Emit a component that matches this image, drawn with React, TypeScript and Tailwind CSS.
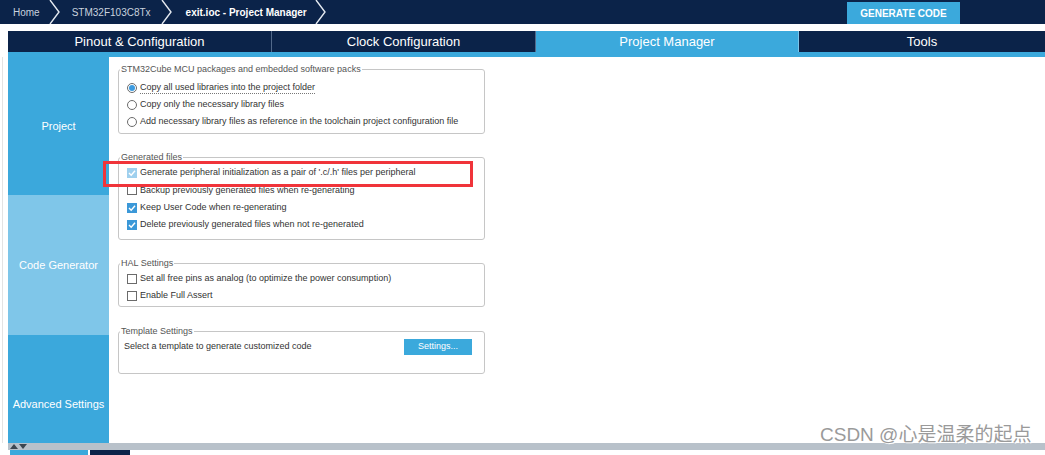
import React from 'react'

const NAVY = 'bg-[#0b2349]'

function Chevron() {
  return (
    <svg width="14" height="24" viewBox="0 0 14 24" className="shrink-0">
      <polyline points="2,0 11,12 2,24" fill="none" stroke="#e4e9f0" strokeWidth="1.4" />
    </svg>
  )
}

function Radio({ checked }: { checked?: boolean }) {
  return (
    <span className="w-[10px] h-[10px] rounded-full border border-[#6b6b6b] bg-white flex items-center justify-center shrink-0">
      {checked && <span className="w-[6px] h-[6px] rounded-full bg-[#3d9be0]" />}
    </span>
  )
}

function Check({ checked, dim }: { checked?: boolean; dim?: boolean }) {
  if (!checked) {
    return <span className="w-[10px] h-[10px] border border-[#6b6b6b] bg-white shrink-0" />
  }
  return (
    <span
      className={`w-[10px] h-[10px] flex items-center justify-center shrink-0 ${dim ? 'bg-[#9fd0ee]' : 'bg-[#3b98d8]'}`}
    >
      <svg width="8" height="8" viewBox="0 0 8 8">
        <polyline points="1,4 3.2,6.2 7,1.8" fill="none" stroke="white" strokeWidth="1.4" />
      </svg>
    </span>
  )
}

function Row({ children, control, className = '' }: { children: React.ReactNode; control: React.ReactNode; className?: string }) {
  return (
    <div className={`flex items-center gap-[3px] h-[17px] pl-[8px] ${className}`}>
      {control}
      <span className="text-[#333] text-[9px] leading-none whitespace-nowrap">{children}</span>
    </div>
  )
}

function Box({ title, children, className = '' }: { title: string; children: React.ReactNode; className?: string }) {
  return (
    <fieldset className={`border border-[#c6c6c6] rounded-[3px] w-[367px] ml-[9px] px-0 ${className}`}>
      <legend className="text-[9px] text-[#555] leading-none ml-[1px] px-[1px]">{title}</legend>
      {children}
    </fieldset>
  )
}

export default function App() {
  return (
    <div className="w-[1045px] h-[455px] bg-white overflow-hidden relative" style={{ fontFamily: '"Liberation Sans", Arial, sans-serif' }}>
      {/* top breadcrumb bar */}
      <div className={`${NAVY} h-[24px] flex items-center text-[10px] text-[#c9d2de]`}>
        <span className="ml-[13px] mr-[8px]">Home</span>
        <Chevron />
        <span className="ml-[10px] mr-[9px]">STM32F103C8Tx</span>
        <Chevron />
        <span className="ml-[12px] mr-[7px] font-bold text-white">exit.ioc - Project Manager</span>
        <Chevron />
        <div className="ml-auto mr-[85px] self-end h-[22px] w-[113px] bg-[#3ba9dc] flex items-center justify-center text-white font-bold text-[10px]">
          GENERATE CODE
        </div>
      </div>

      {/* main tabs */}
      <div className="mt-[7px] ml-[8px] flex h-[21px] text-white text-[13px] leading-none">
        <div className={`${NAVY} w-[264px] flex items-center justify-center border-r border-[#52698a]`}>Pinout &amp; Configuration</div>
        <div className={`${NAVY} w-[264px] flex items-center justify-center border-r border-[#52698a]`}>Clock Configuration</div>
        <div className="bg-[#3ba9dc] w-[263px] flex items-center justify-center border-r border-[#7cc4e8]">Project Manager</div>
        <div className={`${NAVY} flex-1 flex items-center justify-center`}>Tools</div>
      </div>
      <div className="ml-[8px] h-[5px] bg-[#3ba9dc]" />

      {/* body */}
      <div className="flex h-[386px]">
        <div className="w-[8px] flex">
          <div className="w-[2px]" />
          <div className="w-px bg-[#e3e3e3]" />
        </div>
        <div className="w-[101px] flex flex-col text-white text-[11px]">
          <div className="h-[138px] bg-[#3ba8dc] flex items-center justify-center">Project</div>
          <div className="h-[140px] bg-[#7fc6e9] flex items-center justify-center">Code Generator</div>
          <div className="flex-1 bg-[#3ba8dc] flex items-center justify-center pt-[30px]">Advanced Settings</div>
        </div>
        <div className="flex-1 flex flex-col pt-[8px] relative">
          <Box title="STM32Cube MCU packages and embedded software packs" className="h-[69px] pt-[5px]">
            <Row control={<Radio checked />}>
              <span className="border-b border-dotted border-[#777] pb-[1px]">Copy all used libraries into the project folder</span>
            </Row>
            <Row control={<Radio />}>Copy only the necessary library files</Row>
            <Row control={<Radio />}>Add necessary library files as reference in the toolchain project configuration file</Row>
          </Box>
          <Box title="Generated files" className="h-[87px] mt-[19px] pt-[2px]">
            <Row control={<Check checked dim />}>Generate peripheral initialization as a pair of '.c/.h' files per peripheral</Row>
            <Row control={<Check />} className="h-[18px]">Backup previously generated files when re-generating</Row>
            <Row control={<Check checked />}>Keep User Code when re-generating</Row>
            <Row control={<Check checked />}>Delete previously generated files when not re-generated</Row>
          </Box>
          <Box title="HAL Settings" className="h-[48px] mt-[19px] pt-[2px]">
            <Row control={<Check />}>Set all free pins as analog (to optimize the power consumption)</Row>
            <Row control={<Check />}>Enable Full Assert</Row>
          </Box>
          <Box title="Template Settings" className="h-[47px] mt-[20px] pt-[2px]">
            <div className="flex items-center justify-between h-[17px] pl-[5px] pr-[12px]">
              <span className="text-[#333] text-[9px] leading-none whitespace-nowrap">Select a template to generate customized code</span>
              <div className="w-[68px] h-[16px] bg-[#3ba9dc] text-white text-[9px] flex items-center justify-center">Settings...</div>
            </div>
          </Box>

          {/* red highlight */}
          <div className="absolute left-[-6px] top-[104px] w-[370px] h-[26px] border-[3px] border-[#f0343a]" />
        </div>
      </div>

      {/* bottom splitter */}
      <div className="flex h-[7px] bg-[#b8c1ca] ml-[8px] items-center pl-[2px] gap-[1px]">
        <svg width="8" height="5" viewBox="0 0 8 5"><polygon points="0,5 4,0 8,5" fill="#3c4650" /></svg>
        <svg width="8" height="5" viewBox="0 0 8 5"><polygon points="0,0 8,0 4,5" fill="#3c4650" /></svg>
      </div>
      <div className="flex h-[5px] ml-[10px] gap-[2px]">
        <div className="w-[78px] bg-[#3ba9dc]" />
        <div className={`w-[40px] ${NAVY}`} />
      </div>

      {/* watermark */}
      <div
        className="absolute left-[820px] top-[425px] text-[19px] leading-none text-[#9a9a9a]"
        style={{ fontFamily: '"Liberation Sans", "Noto Sans CJK SC", sans-serif', textShadow: '1px 1px 0 #fff, -1px -1px 0 #fff' }}
      >
        CSDN @心是温柔的起点
      </div>
    </div>
  )
}
